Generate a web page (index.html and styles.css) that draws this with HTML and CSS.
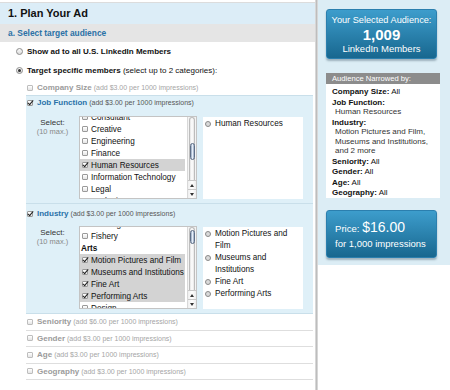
FILE: index.html
```
<html>
<head>
	<title>Plan Your Ad</title>
	<link rel="stylesheet" href="styles.css">
</head>
<body>
	<div class="page">
		<div class="main">
			<div class="title">1. Plan Your Ad</div>
			<div class="step">a. Select target audience</div>
			<div class="choice"><span class="rd"></span><b>Show ad to all U.S. LinkedIn Members</b></div>
			<div class="choice"><span class="rd on"></span><b>Target specific members</b>&nbsp;(select up to 2 categories):</div>

			<div class="cats">
				<div class="cat off"><span class="cb"></span><b>Company Size</b><small>(add $3.00 per 1000 impressions)</small></div>

				<div class="open">
					<div class="sect first">
						<div class="cat head"><span class="cb on"></span><b>Job Function</b><small>(add $3.00 per 1000 impressions)</small></div>
						<div class="pick">
							<div class="lbl">Select:<small>(10 max.)</small></div>
							<div class="list">
								<div class="items job">
									<div class="it"><span class="cb"></span>Consultant</div>
									<div class="it"><span class="cb"></span>Creative</div>
									<div class="it"><span class="cb"></span>Engineering</div>
									<div class="it"><span class="cb"></span>Finance</div>
									<div class="it sel"><span class="cb on"></span>Human Resources</div>
									<div class="it"><span class="cb"></span>Information Technology</div>
									<div class="it"><span class="cb"></span>Legal</div>
									<div class="it"><span class="cb"></span>Marketing</div>
								</div>
								<div class="sbar">
									<div class="track"><div class="thumb"></div></div>
									<div class="arr"><span class="up"></span></div>
									<div class="arr"><span class="down"></span></div>
								</div>
							</div>
							<div class="chosen">
								<div class="ch"><span class="x"></span><span>Human Resources</span></div>
							</div>
						</div>
					</div>

					<div class="sect">
						<div class="cat head"><span class="cb on"></span><b>Industry</b><small>(add $3.00 per 1000 impressions)</small></div>
						<div class="pick">
							<div class="lbl">Select:<small>(10 max.)</small></div>
							<div class="list">
								<div class="items ind">
									<div class="it"><span class="cb"></span>Farming</div>
									<div class="it"><span class="cb"></span>Fishery</div>
									<div class="it grp">Arts</div>
									<div class="it sel"><span class="cb on"></span>Motion Pictures and Film</div>
									<div class="it sel"><span class="cb on"></span>Museums and Institutions</div>
									<div class="it sel"><span class="cb on"></span>Fine Art</div>
									<div class="it sel"><span class="cb on"></span>Performing Arts</div>
									<div class="it"><span class="cb"></span>Design</div>
								</div>
								<div class="sbar">
									<div class="track"><div class="thumb top"></div></div>
									<div class="arr"><span class="up"></span></div>
									<div class="arr"><span class="down"></span></div>
								</div>
							</div>
							<div class="chosen">
								<div class="ch"><span class="x"></span><span>Motion Pictures and Film</span></div>
								<div class="ch"><span class="x"></span><span>Museums and Institutions</span></div>
								<div class="ch"><span class="x"></span><span>Fine Art</span></div>
								<div class="ch"><span class="x"></span><span>Performing Arts</span></div>
							</div>
						</div>
					</div>
				</div>

				<div class="cat off row"><span class="cb"></span><b>Seniority</b><small>(add $6.00 per 1000 impressions)</small></div>
				<div class="cat off row"><span class="cb"></span><b>Gender</b><small>(add $3.00 per 1000 impressions)</small></div>
				<div class="cat off row"><span class="cb"></span><b>Age</b><small>(add $3.00 per 1000 impressions)</small></div>
				<div class="cat off row"><span class="cb"></span><b>Geography</b><small>(add $3.00 per 1000 impressions)</small></div>
			</div>
		</div>

		<div class="sep"></div>

		<div class="side">
			<div class="sbox">
				<div class="aud">
					<span class="a1">Your Selected Audience:</span>
					<span class="a2">1,009</span>
					<span class="a3">LinkedIn Members</span>
				</div>
				<div class="narrow">
					<div class="nhead">Audience Narrowed by:</div>
					<div class="nbody">
						<div class="ng"><b>Company Size:</b> All</div>
						<div class="ng"><b>Job Function:</b><div class="nv">Human Resources</div></div>
						<div class="ng"><b>Industry:</b><div class="nv">Motion Pictures and Film,<br>Museums and Institutions,<br>and 2 more</div></div>
						<div class="ng"><b>Seniority:</b> All</div>
						<div class="ng"><b>Gender:</b> All</div>
						<div class="ng"><b>Age:</b> All</div>
						<div class="ng"><b>Geography:</b> All</div>
					</div>
				</div>
				<div class="price">
					<div class="p1">Price: <span>$16.00</span></div>
					<div class="p2">for 1,000 impressions</div>
				</div>
			</div>
		</div>
	</div>
</body>
</html>
```

FILE: styles.css
```
*{
	box-sizing: border-box;
}

body{
	margin: 0;
	font-family: "Liberation Sans", Arial, Helvetica, sans-serif;
	color: #1a1a1a;
	background: #fff;
}

.page{
	display: flex;
	width: 450px;
	height: 390px;
	overflow: hidden;
}

/* left column */
.main{
	width: 315px;
	padding-top: 2px;
}

.title{
	height: 22px;
	border-top: 1px solid #dcdcdc;
	background: #dcedf7;
	padding-left: 8px;
	font-size: 11px;
	font-weight: bold;
	line-height: 21px;
	color: #111;
}

.step{
	height: 18px;
	background: #e5e5e5;
	padding-left: 8px;
	font-size: 8.4px;
	font-weight: bold;
	line-height: 18px;
	color: #2a71a6;
}

.choice{
	display: flex;
	align-items: center;
	height: 19px;
	padding-left: 16px;
	font-size: 8px;
	color: #111;
	white-space: nowrap;
}

/* radio */
.rd{
	display: flex;
	align-items: center;
	justify-content: center;
	width: 7px;
	height: 7px;
	margin-right: 4px;
	border: 1px solid #8d8d8d;
	border-radius: 50%;
	background: linear-gradient(#fafafa, #dcdcdc);
}

.rd.on::after{
	content: "";
	width: 3px;
	height: 3px;
	border-radius: 50%;
	background: #333;
}

/* checkbox */
.cb{
	position: relative;
	flex: none;
	width: 6px;
	height: 6px;
	margin-right: 4px;
	border: 1px solid #9a9a9a;
	border-radius: 1px;
	background: linear-gradient(#fff, #e4e4e4);
}

.cb.on::after{
	content: "";
	position: absolute;
	left: 1px;
	top: -2px;
	width: 2px;
	height: 5px;
	border: solid #1e1e1e;
	border-width: 0 1.5px 1.5px 0;
	transform: rotate(40deg);
}

/* categories */
.cats{
	margin-left: 26px;
	margin-right: 2px;
}

.cat{
	display: flex;
	align-items: center;
	height: 15px;
	padding-left: 1px;
	font-size: 8px;
	white-space: nowrap;
}

.cat b{
	color: #2a72a8;
	margin-right: 2px;
}

.cat small{
	font-size: 7px;
	color: #555;
}

.cat.off b{
	color: #9b9b9b;
}

.cat.off small{
	color: #a5a5a5;
}

.cat.off .cb{
	border-color: #bdbdbd;
}

.cat.row{
	height: 16.5px;
	border-bottom: 1px solid #dedede;
}

.open{
	background: #dff0f8;
	border-top: 1px solid #c9dfea;
	border-bottom: 1px solid #c9dfea;
}

.sect{
	padding: 3px 0 4px 0;
}

.sect.first{
	padding-top: 0;
	border-bottom: 1px solid #c9dfea;
}

.cat.head{
	height: 13px;
}

.pick{
	display: flex;
	margin-top: 6px;
}

.sect.first .pick{
	margin-top: 7px;
}

.lbl{
	display: flex;
	flex-direction: column;
	align-items: center;
	width: 53px;
	padding-top: 2px;
	font-size: 8px;
	line-height: 9px;
	color: #333;
}

.lbl small{
	font-size: 7.5px;
	color: #888;
}

.list{
	display: flex;
	width: 118px;
	height: 83px;
	background: #fff;
	border: 1px solid #c4c4c4;
	overflow: hidden;
}

.items{
	flex: 1;
}

.items.job{
	margin-top: -6px;
}

.items.ind{
	margin-top: -9px;
}

.it{
	display: flex;
	align-items: center;
	height: 12px;
	margin-right: 2px;
	padding-left: 2px;
	font-size: 8.2px;
	color: #111;
	white-space: nowrap;
}

.it .cb{
	margin-right: 3px;
}

.it.sel{
	background: #d3d3d3;
}

.it.grp{
	padding-left: 1px;
	font-weight: bold;
}

/* mac style scrollbar */
.sbar{
	display: flex;
	flex-direction: column;
	width: 9px;
	background: #f3f3f3;
	border-left: 1px solid #d8d8d8;
}

.track{
	flex: 1;
	margin: 0 1px;
	border: 1px solid #bcbcbc;
	border-bottom: none;
	border-radius: 4px 4px 0 0;
	background: linear-gradient(to right, #e4e4e4, #fff, #e4e4e4);
}

.thumb{
	width: 5px;
	height: 17px;
	margin: 25px auto 0 auto;
	border: 1px solid #5f6f86;
	border-radius: 3px;
	background: linear-gradient(to right, #8fa2bc, #e6eef8, #8fa2bc);
}

.thumb.top{
	margin-top: 2px;
	height: 14px;
}

.arr{
	display: flex;
	align-items: center;
	justify-content: center;
	height: 9px;
	border-top: 1px solid #c8c8c8;
	background: linear-gradient(to right, #eee, #fff, #eee);
}

.up{
	border: 2px solid transparent;
	border-bottom: 3px solid #333;
	border-top: none;
}

.down{
	border: 2px solid transparent;
	border-top: 3px solid #333;
	border-bottom: none;
}

.chosen{
	width: 100px;
	height: 82px;
	margin-left: 6px;
	margin-top: 1px;
	padding: 1px 2px 0 2px;
	background: #fff;
	font-size: 8.2px;
	color: #111;
}

.ch{
	display: flex;
	line-height: 12px;
}

.x{
	flex: none;
	width: 6px;
	height: 6px;
	margin: 3px 4px 0 0;
	border: 1.5px solid #8a8a8a;
	border-radius: 50%;
	background: #dadada;
}

/* separator */
.sep{
	width: 3px;
	background: linear-gradient(to right, #e4e4e4, #bdbdbd 50%, #e4e4e4);
}

/* right column */
.side{
	flex: 1;
}

.sbox{
	background: #dcedf5;
	padding: 9px 10px 7px 8px;
}

.aud{
	display: flex;
	flex-direction: column;
	align-items: center;
	height: 50px;
	margin-right: 3px;
	padding-top: 4.5px;
	border: 1px solid #2b7fae;
	border-radius: 3px;
	background: linear-gradient(#3d9dcc, #18678f);
	box-shadow: 0 2px 2px rgba(40,70,90,.35);
	color: #fff;
}

.a1{
	font-size: 9.2px;
	line-height: 11px;
}

.a2{
	font-size: 15px;
	font-weight: bold;
	line-height: 17px;
}

.a3{
	font-size: 9.5px;
	line-height: 12px;
}

.narrow{
	margin-top: 14px;
}

.nhead{
	height: 11px;
	padding-left: 6px;
	background: #8c8c8c;
	font-size: 7.6px;
	line-height: 11px;
	color: #fff;
}

.nbody{
	height: 114px;
	padding: 3px 4px 0 6px;
	background: #fff;
	font-size: 8px;
	line-height: 9.5px;
	color: #111;
}

.ng{
	margin-bottom: 1px;
}

.nv{
	padding-left: 3px;
	color: #333;
}

.price{
	height: 48px;
	margin-top: 12px;
	margin-right: 3px;
	padding: 7px 0 0 8px;
	border: 1px solid #2b7fae;
	border-radius: 3px;
	background: linear-gradient(#3d9dcc, #18678f);
	box-shadow: 0 2px 2px rgba(40,70,90,.35);
	color: #fff;
}

.p1{
	font-size: 9.6px;
	line-height: 18px;
}

.p1 span{
	font-size: 14px;
}

.p2{
	font-size: 9.5px;
	line-height: 12px;
}
```
